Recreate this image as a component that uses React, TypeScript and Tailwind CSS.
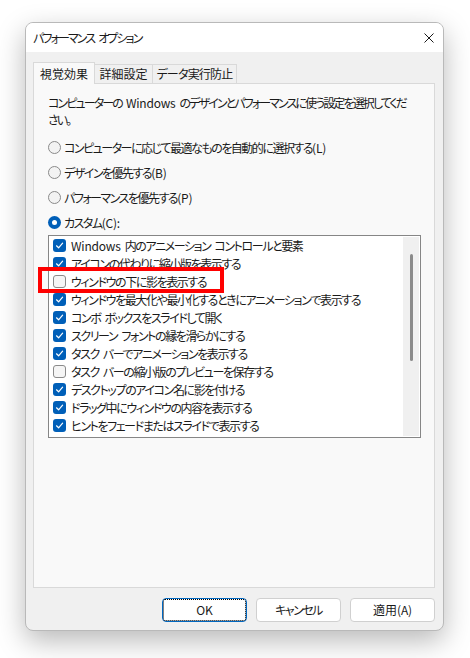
import React from "react";

const font = "font-['Noto_Sans_CJK_JP','Noto_Sans',sans-serif] [font-feature-settings:'palt']";

function T({ text }: { text: string }) {
  const parts = text.split(/( |[\x21-\x7e]+)/).filter((p) => p.length > 0);
  return (
    <>
      {parts.map((p, i) =>
        p === " " ? (
          <span key={i} className="inline-block w-[4px]">
            {" "}
          </span>
        ) : /^[\x21-\x7e]+$/.test(p) ? (
          <span key={i} className="tracking-[-0.2px]">
            {p}
          </span>
        ) : (
          <React.Fragment key={i}>{p}</React.Fragment>
        )
      )}
    </>
  );
}

function Radio({ checked, label }: { checked?: boolean; label: string }) {
  return (
    <div className="flex h-[25px] items-center">
      {checked ? (
        <span className="flex h-[13px] w-[13px] items-center justify-center rounded-full bg-[#005fb8]">
          <span className="h-[5px] w-[5px] rounded-full bg-white" />
        </span>
      ) : (
        <span className="h-[13px] w-[13px] rounded-full border border-[#8a8a8a] bg-[#f3f3f3]" />
      )}
      <span className="ml-[3px] whitespace-nowrap text-[12px] leading-[17px] tracking-[-1.5px] text-[#1a1a1a]">
        <T text={label} />
      </span>
    </div>
  );
}

function Check({ checked, label }: { checked: boolean; label: string }) {
  return (
    <div className="flex h-[18px] shrink-0 items-center pl-[4px]">
      {checked ? (
        <span className="flex h-[13px] w-[13px] items-center justify-center rounded-[3px] bg-[#005fb8]">
          <svg width="9" height="9" viewBox="0 0 9 9" fill="none">
            <path d="M1.5 4.8 L3.6 6.8 L7.6 2.2" stroke="white" strokeWidth="1.2" strokeLinecap="round" strokeLinejoin="round" />
          </svg>
        </span>
      ) : (
        <span className="h-[13px] w-[13px] rounded-[3px] border border-[#8a8a8a] bg-[#f5f5f5]" />
      )}
      <span className="ml-[5px] whitespace-nowrap text-[12px] leading-[17px] tracking-[-1.4px] text-[#1a1a1a]">
        <T text={label} />
      </span>
    </div>
  );
}

const items: [boolean, string][] = [
  [true, "Windows 内のアニメーション コントロールと要素"],
  [true, "アイコンの代わりに縮小版を表示する"],
  [false, "ウィンドウの下に影を表示する"],
  [true, "ウィンドウを最大化や最小化するときにアニメーションで表示する"],
  [true, "コンボ ボックスをスライドして開く"],
  [true, "スクリーン フォントの縁を滑らかにする"],
  [true, "タスク バーでアニメーションを表示する"],
  [false, "タスク バーの縮小版のプレビューを保存する"],
  [true, "デスクトップのアイコン名に影を付ける"],
  [true, "ドラッグ中にウィンドウの内容を表示する"],
  [true, "ヒントをフェードまたはスライドで表示する"],
  [true, "プレビューを有効にする"],
];

export default function App() {
  return (
    <div className={`relative h-[658px] w-[470px] overflow-hidden bg-white pl-[25px] pt-[22px] ${font}`}>
      <div className="flex h-[609px] w-[419px] flex-col overflow-hidden rounded-[8px] border border-[#b9b9b9] bg-[#f0f0f0] shadow-[0_10px_28px_rgba(0,0,0,0.28)]">
        {/* title bar */}
        <div className="flex h-[29px] shrink-0 items-center justify-between bg-white pl-[7px] pr-[9px]">
          <span className="whitespace-nowrap text-[12px] leading-[17px] tracking-[-1.9px] text-[#1a1a1a]">
            <T text="パフォーマンス オプション" />
          </span>
          <svg width="10" height="10" viewBox="0 0 10 10">
            <path d="M0.5 0.5 L9.5 9.5 M9.5 0.5 L0.5 9.5" stroke="#1a1a1a" strokeWidth="1" />
          </svg>
        </div>
        {/* body */}
        <div className="flex flex-1 flex-col pl-[7px] pr-[8px] pt-[10px]">
          <div className="flex h-[21px] items-end">
            <div className="relative z-10 flex h-[22px] w-[62px] items-center justify-center self-start border border-b-0 border-[#d9d9d9] bg-[#f9f9f9] text-[12px] text-[#1a1a1a]">
              視覚効果
            </div>
            <div className="flex h-[19px] w-[58px] items-center justify-center border border-b-0 border-l-0 border-[#d9d9d9] text-[12px] text-[#1a1a1a]">
              詳細設定
            </div>
            <div className="flex h-[19px] w-[84px] items-center justify-center border border-b-0 border-l-0 border-[#d9d9d9] text-[12px] tracking-[-0.8px] text-[#1a1a1a]">
              データ実行防止
            </div>
          </div>
          <div className="flex h-[505px] w-[402px] flex-col border border-[#d9d9d9] bg-[#f9f9f9] pl-[14px] pr-[13px] pt-[10px]">
            <p className="whitespace-nowrap text-[12px] leading-[17px] tracking-[-1.9px] text-[#1a1a1a]">
              <T text="コンピューターの Windows のデザインとパフォーマンスに使う設定を選択してくだ" />
              <br />
              さい。
            </p>
            <div className="mt-[7px] flex flex-col">
              <Radio label="コンピューターに応じて最適なものを自動的に選択する(L)" />
              <Radio label="デザインを優先する(B)" />
              <Radio label="パフォーマンスを優先する(P)" />
              <Radio checked label="カスタム(C):" />
            </div>
            <div className="flex h-[203px] w-[373px] border border-[#868686] bg-white">
              <div className="flex flex-1 flex-col overflow-hidden">
                {items.map(([c, l], i) => (
                  <Check key={i} checked={c} label={l} />
                ))}
              </div>
              <div className="my-[1px] mr-[1px] flex w-[16px] justify-center bg-[#f0f0f0]">
                <div className="mt-[17px] h-[107px] w-[3px] rounded-full bg-[#8a8a8a]" />
              </div>
            </div>
          </div>
          <div className="mt-[10px] flex justify-end gap-[9px]">
            <button className="relative flex h-[24px] w-[85px] items-center justify-center rounded-[4px] border border-[#0067c0] bg-white text-[12px] text-[#1a1a1a]">
              <span className="absolute inset-0 rounded-[2px] border border-dotted border-black" />
              OK
            </button>
            <button className="flex h-[24px] w-[85px] items-center justify-center rounded-[4px] border border-[#d0d0d0] bg-white text-[12px] tracking-[-1.5px] text-[#1a1a1a]">
              キャンセル
            </button>
            <button className="flex h-[24px] w-[85px] items-center justify-center rounded-[4px] border border-[#d0d0d0] bg-white text-[12px] text-[#1a1a1a]">
              <T text="適用(A)" />
            </button>
          </div>
        </div>
      </div>
      <div className="absolute left-[38px] top-[267px] h-[26px] w-[186px] border-4 border-[#ff0000]" />
    </div>
  );
}
